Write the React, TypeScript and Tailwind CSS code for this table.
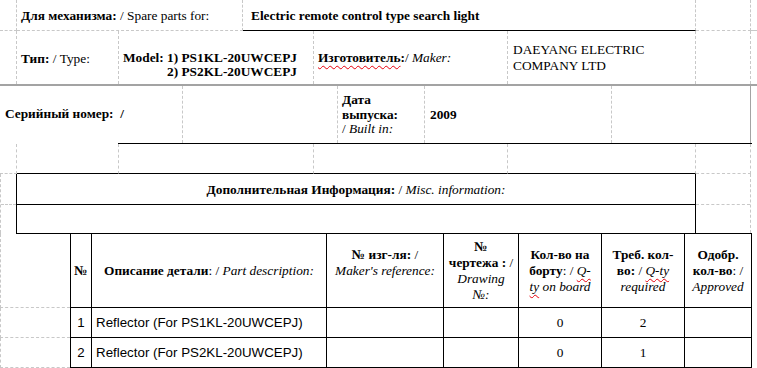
import React from "react";

const dash = "border-dashed border-[#c8c8c8]";
const solidBlackBottom = "border-b-black [border-bottom-style:solid]";
const wavy = "underline decoration-wavy decoration-red-600 decoration-1 underline-offset-[3px]";

const cols = "grid grid-cols-[70px_22px_235px_117px_75px_83px_83px_67px_1fr]";

const App = () => {
  return (
    <div className="w-[757px] h-[368px] overflow-hidden bg-white text-black font-['Liberation_Serif',serif] text-[13.33px] leading-[15px]">
      {/* spare parts for */}
      <div className="flex h-[31px]">
        <div className={`w-[17px] shrink-0 border-r border-b ${dash}`} />
        <div className={`w-[226px] shrink-0 border-r border-b ${dash} flex items-center pl-[4px]`}>
          <span className="font-bold">Для механизма:</span>&nbsp;/ Spare parts for:
        </div>
        <div className={`w-[453px] shrink-0 border-r border-b ${dash} ${solidBlackBottom} flex items-center pl-[8px] font-bold`}>
          Electric remote control type search light
        </div>
        <div className={`w-[55px] shrink-0 border-r border-b ${dash}`} />
        <div className={`flex-1 border-b ${dash}`} />
      </div>

      {/* type / maker */}
      <div className="flex h-[55px] border-b-2 border-[#a3a3a3]">
        <div className={`w-[17px] shrink-0 border-r ${dash}`} />
        <div className={`w-[102px] shrink-0 border-r ${dash} pl-[4px] pt-[20px]`}>
          <span className="font-bold">Тип:</span> / Type:
        </div>
        <div className={`w-[195px] shrink-0 border-r ${dash} pl-[4px] pt-[20px] font-bold leading-[14px]`}>
          <div>Model: 1) PS1KL-20UWCEPJ</div>
          <div className="pl-[44px]">2) PS2KL-20UWCEPJ</div>
        </div>
        <div className={`w-[194px] shrink-0 border-r ${dash} pl-[4px] pt-[19px]`}>
          <span className={`font-bold ${wavy}`}>Изготовитель</span>
          <span className="font-bold">:</span>/ <i>Maker:</i>
        </div>
        <div className={`w-[188px] shrink-0 border-r ${dash} pl-[5px] pt-[11px] leading-[16px]`}>
          <div>DAEYANG ELECTRIC</div>
          <div>COMPANY LTD</div>
        </div>
        <div className={`w-[55px] shrink-0 border-r ${dash}`} />
        <div className="flex-1" />
      </div>

      {/* serial / built in */}
      <div className="flex h-[57px]">
        <div className={`w-[183px] shrink-0 border-r ${dash} pl-[5px] pt-[20px] font-bold`}>
          Серийный номер:&nbsp; /
        </div>
        <div className={`w-[155px] shrink-0 border-r ${dash}`} />
        <div className={`w-[87px] shrink-0 border-r ${dash} pl-[4px] pt-[7px] leading-[14.5px]`}>
          <div className="font-bold">Дата</div>
          <div className="font-bold">выпуска:</div>
          <div>
            / <i>Built in:</i>
          </div>
        </div>
        <div className={`w-[187px] shrink-0 border-r ${dash} pl-[5px] pt-[21px] font-bold`}>2009</div>
        <div className="w-[139px] shrink-0 border-r border-[#a3a3a3]" />
        <div className="flex-1" />
      </div>
      <div className="flex h-[1px]">
        <div className="w-[118px] shrink-0" />
        <div className="w-[634px] shrink-0 bg-black" />
      </div>

      {/* empty row */}
      <div className="flex h-[30px]">
        <div className={`w-[17px] shrink-0 border-r border-b ${dash}`} />
        <div className={`w-[102px] shrink-0 border-r border-b ${dash} ${solidBlackBottom}`} />
        <div className={`w-[195px] shrink-0 border-r border-b ${dash} ${solidBlackBottom}`} />
        <div className={`w-[194px] shrink-0 border-r border-b ${dash} ${solidBlackBottom}`} />
        <div className={`w-[188px] shrink-0 border-r border-b ${dash} ${solidBlackBottom}`} />
        <div className={`w-[55px] shrink-0 border-r border-b ${dash}`} />
        <div className="flex-1" />
      </div>

      {/* misc information */}
      <div className="flex h-[59px]">
        <div className={`w-[16px] shrink-0 border-l ${dash}`}>
          <div className={`h-[31px] border-b ${dash}`} />
        </div>
        <div className="w-[680px] shrink-0 border-x border-black flex flex-col">
          <div className="h-[31px] border-b border-black flex items-center justify-center">
            <span className="font-bold">Дополнительная Информация:</span>&nbsp;/&nbsp;<i>Misc. information:</i>
          </div>
        </div>
        <div className={`w-[55px] shrink-0 border-r ${dash}`}>
          <div className={`h-[31px] border-b ${dash}`} />
        </div>
        <div className="flex-1" />
      </div>
      <div className="flex h-[1px]">
        <div className={`w-[16px] shrink-0 border-l ${dash}`} />
        <div className="w-[736px] shrink-0 bg-black" />
      </div>

      {/* parts table */}
      <div className={`${cols} h-[74px] leading-[16px]`}>
        <div className={`border-l border-b ${dash}`} />
        <div className="border-x border-b border-black flex items-center justify-center font-bold">№</div>
        <div className="border-r border-b border-black flex items-center justify-center">
          <span className="font-bold">Описание детали</span>: /&nbsp;<i>Part description:</i>
        </div>
        <div className="border-r border-b border-black flex flex-col justify-center items-center text-center pb-[16px]">
          <div>
            <span className="font-bold">№ изг-ля:</span> /
          </div>
          <i>Maker's reference:</i>
        </div>
        <div className="border-r border-b border-black flex flex-col justify-center items-center text-center">
          <div className="font-bold">№</div>
          <div>
            <span className="font-bold">чертежа :</span> /
          </div>
          <i>Drawing</i>
          <i>№:</i>
        </div>
        <div className="border-r border-b border-black flex flex-col justify-center items-center text-center">
          <div className="font-bold">Кол-во на</div>
          <div>
            <span className="font-bold">борту</span>: / <i className={wavy}>Q-</i>
          </div>
          <i>
            <span className={wavy}>ty</span> on board
          </i>
        </div>
        <div className="border-r border-b border-black flex flex-col justify-center items-center text-center">
          <div className="font-bold">Треб. кол-</div>
          <div>
            <span className="font-bold">во:</span> / <i className={wavy}>Q-ty</i>
          </div>
          <i>required</i>
        </div>
        <div className="border-r border-b border-black flex flex-col justify-center items-center text-center">
          <div className="font-bold">Одобр.</div>
          <div>
            <span className="font-bold">кол-во</span>: /
          </div>
          <i>Approved</i>
        </div>
        <div />
      </div>

      {[
        { n: "1", name: "Reflector (For PS1KL-20UWCEPJ)", onBoard: "0", required: "2" },
        { n: "2", name: "Reflector (For PS2KL-20UWCEPJ)", onBoard: "0", required: "1" },
      ].map((row) => (
        <div key={row.n} className={`${cols} h-[30px]`}>
          <div className={`border-l border-b ${dash}`} />
          <div className="border-x border-b border-black flex items-center justify-center font-['Liberation_Sans',sans-serif]">
            {row.n}
          </div>
          <div className="border-r border-b border-black flex items-center pl-[4px] font-['Liberation_Sans',sans-serif]">
            {row.name}
          </div>
          <div className="border-r border-b border-black" />
          <div className="border-r border-b border-black" />
          <div className="border-r border-b border-black flex items-center justify-center">{row.onBoard}</div>
          <div className="border-r border-b border-black flex items-center justify-center">{row.required}</div>
          <div className="border-r border-b border-black" />
          <div />
        </div>
      ))}
    </div>
  );
};

export default App;
